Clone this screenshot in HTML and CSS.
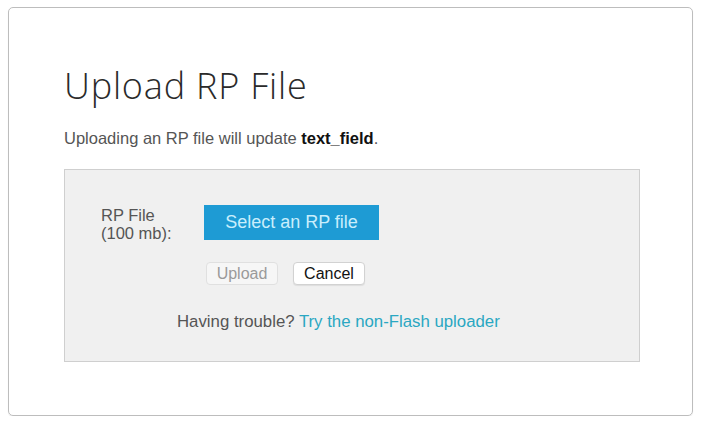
FILE: index.html
```html
<!DOCTYPE html>
<html>
<head>
<meta charset="utf-8">
<link rel="stylesheet" href="styles.css">
</head>
<body>
<div class="card">
  <h1 class="title">Upload RP File</h1>
  <p class="intro">Uploading an RP file will update <b>text_field</b>.</p>
  <div class="panel">
    <div class="row">
      <div class="label">RP File<br>(100 mb):</div>
      <div class="controls">
        <button class="select">Select an RP file</button>
        <div class="actions">
          <button class="btn disabled">Upload</button>
          <button class="btn">Cancel</button>
        </div>
      </div>
    </div>
    <p class="trouble">Having trouble? <a href="#">Try the non-Flash uploader</a></p>
  </div>
</div>
</body>
</html>
```
FILE: styles.css
```css
html, body {
  margin: 0;
  padding: 0;
  background: #fff;
}
body {
  padding: 7px 8px 0 8px;
  font-family: "Liberation Sans", Arial, sans-serif;
}
.card {
  box-sizing: border-box;
  width: 685px;
  height: 409px;
  border: 1px solid #bdbdbd;
  border-radius: 5px;
  padding: 0 53px 0 55px;
  box-shadow: 0 1px 1px rgba(0,0,0,0.08);
}
.title {
  margin: 53px 0 0 0;
  font-family: "Open Sans", "Lato", sans-serif;
  font-weight: 300;
  font-size: 36px;
  line-height: 50px;
  color: #2a2a2a;
  letter-spacing: 0.8px;
}
.intro {
  margin: 17px 0 0 0;
  font-size: 16.5px;
  line-height: 20px;
  color: #555;
}
.intro b {
  color: #111;
}
.panel {
  box-sizing: border-box;
  margin-top: 21px;
  width: 576px;
  height: 193px;
  background: #f0f0f0;
  border: 1px solid #cfcfcf;
  padding: 35px 0 0 36px;
}
.row {
  display: flex;
}
.label {
  width: 103px;
  font-size: 16.5px;
  line-height: 18px;
  color: #555;
  padding-top: 1px;
}
.controls {
  display: flex;
  flex-direction: column;
  align-items: flex-start;
}
.select {
  width: 175px;
  height: 35px;
  border: none;
  background: #1e9bd4;
  color: #c9eefc;
  font-family: "Liberation Sans", Arial, sans-serif;
  font-size: 18px;
  padding: 0;
}
.actions {
  display: flex;
  gap: 15px;
  margin-top: 22px;
  margin-left: 2px;
}
.btn {
  box-sizing: border-box;
  width: 72px;
  height: 23px;
  border: 1px solid #d2d2d2;
  border-radius: 4px;
  background: #fff;
  color: #111;
  font-family: "Liberation Sans", Arial, sans-serif;
  font-size: 16px;
  padding: 0;
  box-shadow: 0 1px 1px rgba(0,0,0,0.08);
}
.btn.disabled {
  background: #f6f6f6;
  color: #9a9a9a;
  border-color: #e0e0e0;
  box-shadow: none;
}
.trouble {
  margin: 27px 0 0 76px;
  font-size: 16.8px;
  line-height: 20px;
  color: #555;
}
.trouble a {
  color: #2aa7c2;
  text-decoration: none;
}
```
